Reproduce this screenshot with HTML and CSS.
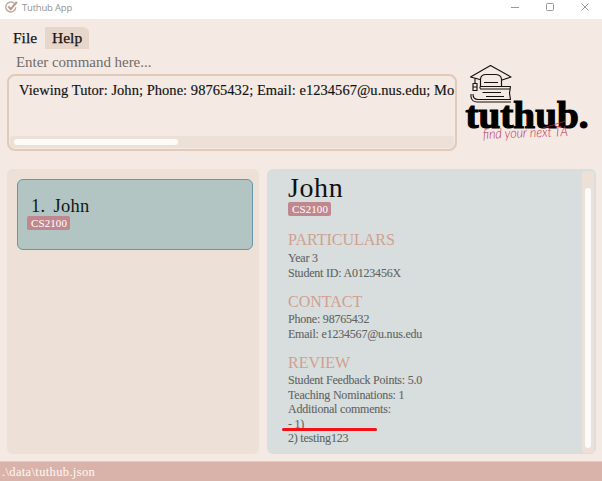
FILE: index.html
```html
<!DOCTYPE html>
<html lang="en">
<head>
<meta charset="utf-8">
<title>Tuthub App</title>
<link rel="stylesheet" href="styles.css">
</head>
<body>
<div class="app">
  <header class="titlebar">
    <svg class="app-icon" width="13" height="13" viewBox="0 0 13 13" fill="none"><path d="M9.2 2.300A5 5 0 1 0 10.8 6.2" stroke="#bda99c" stroke-width="1.4"/><path d="M3.3 5.3L5.7 8.2L11.8 1" stroke="#bd9b88" stroke-width="2"/></svg>
    <span class="app-title">Tuthub App</span>
    <svg class="window-controls" width="80" height="10" viewBox="0 0 80 10" fill="none" stroke="#999"><path d="M0 5.5H8"/><rect x="35.5" y="1.5" width="7" height="7" rx="1"/><path d="M70.5 1.5L77.5 8.5M77.5 1.5L70.5 8.5"/></svg>
  </header>
  <div class="top">
    <div class="command">
      <nav class="menu"><span class="menu-item file">File</span><span class="menu-item active">Help</span></nav>
      <div class="prompt">Enter command here...</div>
      <div class="result">
        <div class="result-text">Viewing Tutor: John; Phone: 98765432; Email: e1234567@u.nus.edu; Mo</div>
        <div class="hscroll"><div class="hthumb"></div></div>
      </div>
    </div>
    <svg class="logo" width="140" height="95" viewBox="460 60 140 95">
      <g fill="none" stroke="#17120f" stroke-width="1.15" stroke-linejoin="round">
        <path d="M480 79.5L470.5 77L490.500 65.500L511 77L502 80M475 78.500V83M473 83.500H477V90.500H473ZM473 87H477"/>
        <path d="M480.500 86V79Q481 74.500 486 74.500H495Q501 74.500 501.500 79V86M484 82.500H498"/>
        <path d="M480 86.500H510.500L509.500 93L510.500 100M480 89H510M482.500 92.500H501M486 96.500H504M471 94V97Q472 102 477 102H511M473 94Q473 99.500 478 99.500H510M480 86.500V88.500"/>
      </g>
      <text class="wordmark" x="465.500" y="127.500" textLength="123" lengthAdjust="spacingAndGlyphs">tuthub.</text>
      <text class="tagline" x="483" y="139" textLength="85" lengthAdjust="spacingAndGlyphs" transform="rotate(-2 483 139)">find your next TA</text>
      <path d="M543 128L566 121" stroke="#bd2850" stroke-width=".7"/>
    </svg>
  </div>
  <main class="panels">
    <section class="list">
      <article class="card">
        <div class="card-name"><span>1.</span><span>John</span></div>
        <span class="tag">CS2100</span>
      </article>
    </section>
    <section class="detail">
      <div class="content">
        <h1>John</h1>
        <span class="tag">CS2100</span>
        <h2 class="particulars">PARTICULARS</h2>
        <p>Year 3</p>
        <p>Student ID: A0123456X</p>
        <h2 class="contact">CONTACT</h2>
        <p>Phone: 98765432</p>
        <p>Email: e1234567@u.nus.edu</p>
        <h2 class="review">REVIEW</h2>
        <p>Student Feedback Points: 5.0</p>
        <p>Teaching Nominations: 1</p>
        <p>Additional comments:</p>
        <p class="marked">- 1)</p>
        <p>2) testing123</p>
      </div>
      <div class="vscroll"><div class="vthumb"></div></div>
    </section>
  </main>
  <footer class="status">.\data\tuthub.json</footer>
</div>
</body>
</html>
```
FILE: styles.css
```css
* { box-sizing: border-box; }
body { margin: 0; font-family: Georgia, "Liberation Serif", serif; background: #f4e9e3; }
.app { width: 602px; height: 481px; display: flex; flex-direction: column; overflow: hidden; }
.titlebar { height: 19px; flex: none; background: #fff; display: flex; align-items: flex-start; padding: 0 11px 0 5px; }
.app-icon { margin-top: 1px; }
.app-title { font: 9.5px/15px "Open Sans", sans-serif; color: #929292; margin-left: 4px; letter-spacing: -.2px; }
.window-controls { margin: 2px 0 0 auto; }
.top { display: flex; height: 150px; flex: none; padding-left: 7px; }
.command { width: 450px; padding-top: 8px; }
.menu { display: flex; height: 22px; font-size: 15.5px; line-height: 22px; color: #171412; -webkit-text-stroke: .25px; }
.menu-item { padding-left: 6px; width: 38px; }
.menu-item.active { width: 44px; padding-left: 7px; background: #e7d6ca; border-radius: 0 6px 0 0; }
.prompt { height: 25px; padding-left: 9px; font-size: 15px; line-height: 26px; color: #726c68; letter-spacing: -.04px; }
.result { height: 77px; border: 2px solid #e2cabb; border-radius: 8px; padding: 0 1px 1px; overflow: hidden; display: flex; flex-direction: column; }
.result-text { flex: 1; padding-left: 9px; line-height: 28px; font-size: 14.5px; white-space: nowrap; color: #111; letter-spacing: .04px; -webkit-text-stroke: .15px; }
.hscroll { height: 12px; background: #ede0d6; border-radius: 3px; padding: 3px 4px; }
.hthumb { width: 164px; height: 6px; border-radius: 3px; background: #fcfbf9; }
.logo { margin: 41px 0 0 3px; flex: none; }
.wordmark { font: bold 37px "Liberation Serif", serif; fill: #000; stroke: #000; stroke-width: 1.2px; }
.tagline { font: italic 300 14px Lato, sans-serif; fill: #bd2850; }
.panels { height: 285px; display: flex; flex: none; gap: 8px; padding: 0 6px 0 7px; }
.list { width: 252px; background: #ede0d7; border-radius: 6px; padding: 10px 6px 0 10px; }
.card { height: 71px; border: 1px solid #6399a8; border-radius: 6px; background: #b2c5c2; padding: 15px 0 0 9px; }
.card-name { display: flex; gap: 8px; height: 21px; padding-left: 4px; font-size: 18.5px; line-height: 23px; color: #111816; letter-spacing: .3px; }
.tag { display: block; width: 43px; height: 14px; border-radius: 2px; background: #c1878e; color: #fff; font-size: 11px; line-height: 14px; padding-left: 4px; letter-spacing: .1px; white-space: nowrap; }
.detail { flex: 1; background: #d8dedd; border-radius: 6px; display: flex; justify-content: space-between; padding: 2px 2px 1px 21px; }
.content { color: #5f6463; width: 200px; }
h1 { margin: 0; height: 31px; font-weight: 400; font-size: 28px; line-height: 33px; color: #111; letter-spacing: .6px; }
h2 { margin: 14px 0 0; height: 21px; font-weight: 400; font-size: 16px; line-height: 20px; color: #d0a092; }
.contact { margin-top: 12px; height: 20px; }
.review { margin-top: 12px; height: 20px; }
p { margin: 0; height: 14.5px; font-size: 12px; line-height: 15px; white-space: nowrap; letter-spacing: -.21px; -webkit-text-stroke: .1px; }
.marked { position: relative; }
.marked::after { content: ""; position: absolute; left: -6px; top: 11px; width: 95px; height: 3px; border-radius: 2px; background: #f11116; }
.vscroll { width: 12px; background: #ede0d7; border-radius: 3px; padding: 17px 3px 5px; }
.vthumb { height: 100%; background: #fcfbf9; border-radius: 3px; }
.status { margin-top: 7px; flex: 1; background: #d9b3aa; border-top: 1px solid #e2cdbf; color: #fff8f4; padding-left: 2px; font-size: 12.5px; line-height: 20px; letter-spacing: .35px; }
```
